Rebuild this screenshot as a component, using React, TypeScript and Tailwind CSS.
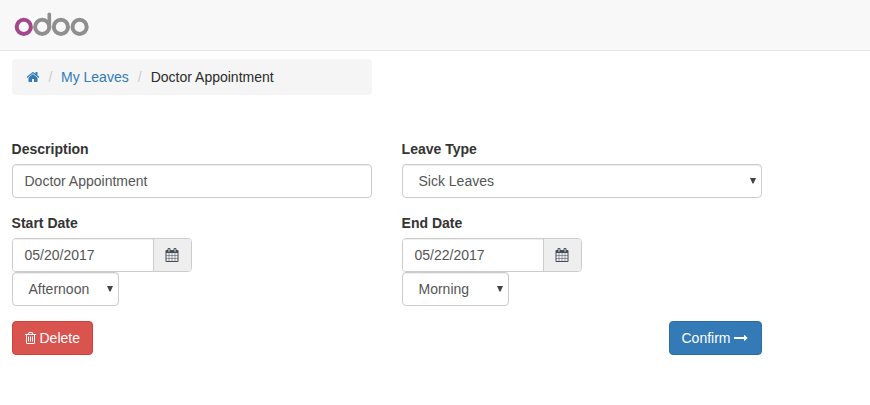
import React from "react";

const PATHS = {
  home: "M1472 992v480q0 26-19 45t-45 19h-384v-384h-256v384h-384q-26 0-45-19t-19-45v-480q0-1 .5-3t.5-3l575-474 575 474q1 2 1 6zm223-69l-62 74q-8 9-21 11h-3q-13 0-21-7l-692-577-692 577q-12 8-24 7-13-2-21-11l-62-74q-8-10-7-23.5t11-21.5l719-599q32-26 76-26t76 26l244 204v-195q0-14 9-23t23-9h192q14 0 23 9t9 23v408l219 182q10 8 11 21.5t-7 23.5z",
  calendar:
    "M192 1664h288v-288h-288v288zm352 0h320v-288h-320v288zm-352-352h288v-320h-288v320zm352 0h320v-320h-320v320zm-352-384h288v-288h-288v288zm736 736h320v-288h-320v288zm-384-736h320v-288h-320v288zm768 736h288v-288h-288v288zm-384-352h320v-320h-320v320zm-352-864v-288q0-13-9.5-22.5t-22.5-9.5h-64q-13 0-22.5 9.5t-9.5 22.5v288q0 13 9.5 22.5t22.5 9.5h64q13 0 22.5-9.5t9.5-22.5zm736 864h288v-320h-288v320zm-384-384h320v-288h-320v288zm384 0h288v-288h-288v288zm32-480v-288q0-13-9.5-22.5t-22.5-9.5h-64q-13 0-22.5 9.5t-9.5 22.5v288q0 13 9.5 22.5t22.5 9.5h64q13 0 22.5-9.5t9.5-22.5zm384-64v1280q0 52-38 90t-90 38h-1408q-52 0-90-38t-38-90v-1280q0-52 38-90t90-38h128v-96q0-66 47-113t113-47h64q66 0 113 47t47 113v96h384v-96q0-66 47-113t113-47h64q66 0 113 47t47 113v96h128q52 0 90 38t38 90z",
  trash:
    "M704 736v576q0 14-9 23t-23 9h-64q-14 0-23-9t-9-23v-576q0-14 9-23t23-9h64q14 0 23 9t9 23zm256 0v576q0 14-9 23t-23 9h-64q-14 0-23-9t-9-23v-576q0-14 9-23t23-9h64q14 0 23 9t9 23zm256 0v576q0 14-9 23t-23 9h-64q-14 0-23-9t-9-23v-576q0-14 9-23t23-9h64q14 0 23 9t9 23zm128 724v-948h-896v948q0 22 7 40.5t14.5 27 10.5 8.5h832q3 0 10.5-8.5t14.5-27 7-40.5zm-672-1076h448l-48-117q-7-9-17-11h-317q-10 2-17 11zm928 32v64q0 14-9 23t-23 9h-96v948q0 83-47 143.5t-113 60.5h-832q-66 0-113-58.5t-47-141.5v-952h-96q-14 0-23-9t-9-23v-64q0-14 9-23t23-9h309l70-167q15-37 54-63t79-26h320q40 0 79 26t54 63l70 167h309q14 0 23 9t9 23z",
  arrow:
    "M1728 893q0 14-10 24l-384 354q-16 14-35 6-19-9-19-29v-224h-1248q-14 0-23-9t-9-23v-192q0-14 9-23t23-9h1248v-224q0-21 19-29t35 5l384 350q10 10 10 23z",
};

function Icon({ name, box = "0 0 1792 1792", className = "" }: { name: keyof typeof PATHS; box?: string; className?: string }) {
  return (
    <svg viewBox={box} className={`shrink-0 ${className}`} fill="currentColor" aria-hidden="true">
      <path d={PATHS[name]} />
    </svg>
  );
}

function Logo() {
  return (
    <svg width="76" height="27" viewBox="0 0 76 27" fill="none" strokeWidth="4" aria-label="odoo">
      <circle cx="9.8" cy="15.9" r="7.1" stroke="#a5468c" />
      <circle cx="28.2" cy="15.9" r="7.1" stroke="#8f8f8f" />
      <path d="M35.3 16V3.2" stroke="#8f8f8f" strokeWidth="3.6" strokeLinecap="round" />
      <circle cx="46.9" cy="15.9" r="7.1" stroke="#8f8f8f" />
      <circle cx="65.6" cy="15.9" r="7.1" stroke="#8f8f8f" />
    </svg>
  );
}

function Select({ value, className }: { value: string; className: string }) {
  return (
    <div className={`flex h-[34px] items-center justify-between rounded border border-[#ccc] bg-white pl-[15.5px] pr-[5px] shadow-[inset_0_1px_1px_rgba(0,0,0,0.075)] ${className}`}>
      <span>{value}</span>
      <svg width="6" height="6" viewBox="0 0 6 6" fill="#444" aria-hidden="true">
        <path d="M0 0H6L3.5 5.5H2.5Z" />
      </svg>
    </div>
  );
}

function DateField({ label, date, period }: { label: string; date: string; period: string }) {
  return (
    <div className="w-[360px]">
      <div className="mb-[5px] -ml-[0.4px] font-bold text-[#333]">{label}</div>
      <div className="flex h-[34px] w-[180px] overflow-hidden rounded border border-[#ccc]">
        <div className="flex flex-1 items-center bg-white pl-[11.5px] shadow-[inset_0_1px_1px_rgba(0,0,0,0.075)]">{date}</div>
        <div className="flex w-[38px] items-center justify-center border-l border-[#ccc] bg-[#eee] pr-px text-[#444c58]">
          <Icon name="calendar" box="64 0 1664 1792" className="h-[14px] w-[14px]" />
        </div>
      </div>
      <Select value={period} className="w-[107px]" />
    </div>
  );
}

export default function App() {
  return (
    <div className="h-[405px] w-[870px] bg-white text-[14px] leading-5 text-[#555] [font-family:'Liberation_Sans',Arial,sans-serif]">
      <header className="h-[51px] border-b border-[#e7e7e7] bg-[#f8f8f8] pl-[14px] pt-[11px]">
        <Logo />
      </header>
      <main className="w-[762px] pl-3 pt-2">
        <nav className="flex h-9 w-[360px] items-center rounded bg-[#f5f5f5] pl-[14px] text-[#333]">
          <Icon name="home" box="64 0 1664 1792" className="h-[14px] w-[14px] text-[#337ab7]" />
          <span className="w-[21px] text-center text-[#ccc]">/</span>
          <span className="text-[#337ab7]">My Leaves</span>
          <span className="w-[22px] text-center text-[#ccc]">/</span>
          <span className="text-[#2b2b2b]">Doctor Appointment</span>
        </nav>
        <div className="mt-11 flex gap-[30px]">
          <div className="w-[360px]">
            <div className="mb-[5px] -ml-[0.4px] font-bold text-[#333]">Description</div>
            <div className="flex h-[34px] items-center rounded border border-[#ccc] pl-[11.5px] shadow-[inset_0_1px_1px_rgba(0,0,0,0.075)]">Doctor Appointment</div>
          </div>
          <div className="w-[360px]">
            <div className="mb-[5px] -ml-[0.4px] font-bold text-[#333]">Leave Type</div>
            <Select value="Sick Leaves" className="w-full" />
          </div>
        </div>
        <div className="mt-[15px] flex gap-[30px]">
          <DateField label="Start Date" date="05/20/2017" period="Afternoon" />
          <DateField label="End Date" date="05/22/2017" period="Morning" />
        </div>
        <div className="mt-[15px] flex justify-between text-white">
          <button className="flex h-[34px] w-[81px] items-center rounded border border-[#d43f3a] bg-[#d9534f] pl-[11.5px]">
            <Icon name="trash" box="192 0 1408 1792" className="mr-1 h-[14px] w-[11px]" />
            Delete
          </button>
          <button className="flex h-[34px] w-[93px] items-center rounded border border-[#2e6da4] bg-[#337ab7] pl-[11.5px]">
            Confirm
            <Icon name="arrow" className="ml-[3.5px] h-[14px] w-[14px]" />
          </button>
        </div>
      </main>
    </div>
  );
}
